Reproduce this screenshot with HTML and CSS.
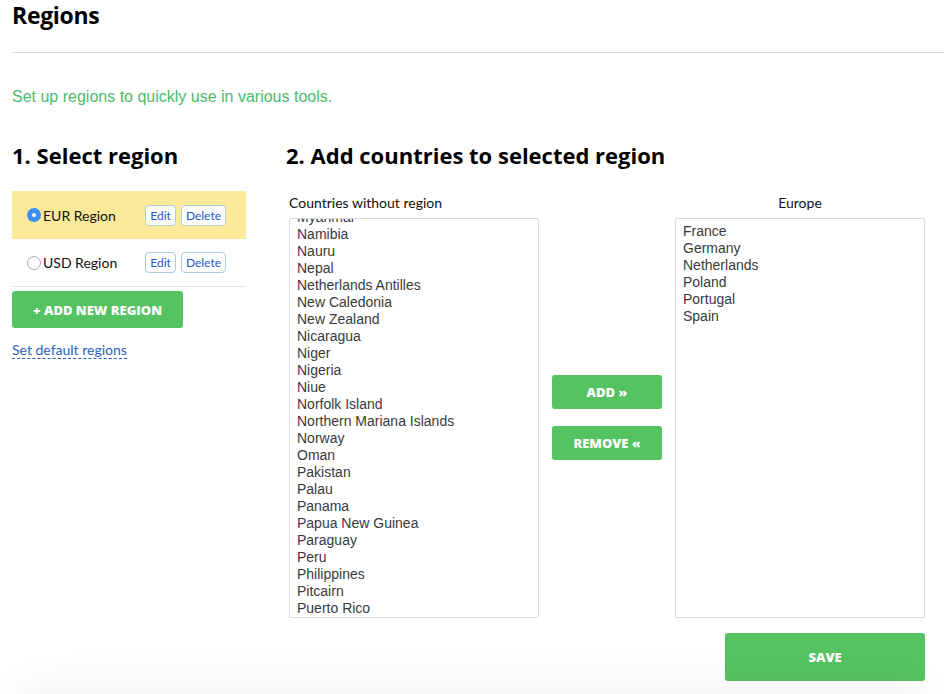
FILE: index.html
```html
<!DOCTYPE html>
<html lang="en">
<head>
<meta charset="utf-8">
<title>Regions</title>
<link rel="stylesheet" href="styles.css">
</head>
<body>
<div class="page">
  <h1 class="title">Regions</h1>
  <hr class="rule">
  <p class="intro">Set up regions to quickly use in various tools.</p>

  <div class="columns">
    <section class="left">
      <h2 class="heading">1. Select region</h2>
      <ul class="regions">
        <li class="region selected">
          <label class="region-label"><span class="radio checked"></span>EUR Region</label>
          <span class="region-actions"><button class="small-btn">Edit</button><button class="small-btn">Delete</button></span>
        </li>
        <li class="region">
          <label class="region-label"><span class="radio"></span>USD Region</label>
          <span class="region-actions"><button class="small-btn">Edit</button><button class="small-btn">Delete</button></span>
        </li>
      </ul>
      <button class="green-btn add-region">+ ADD NEW REGION</button>
      <a class="default-link" href="#">Set default regions</a>
    </section>

    <section class="right">
      <h2 class="heading">2. Add countries to selected region</h2>
      <div class="transfer">
        <div class="list-col">
          <div class="list-label">Countries without region</div>
          <div class="listbox">
            <ul class="items scrolled">
              <li>Myanmar</li>
              <li>Namibia</li>
              <li>Nauru</li>
              <li>Nepal</li>
              <li>Netherlands Antilles</li>
              <li>New Caledonia</li>
              <li>New Zealand</li>
              <li>Nicaragua</li>
              <li>Niger</li>
              <li>Nigeria</li>
              <li>Niue</li>
              <li>Norfolk Island</li>
              <li>Northern Mariana Islands</li>
              <li>Norway</li>
              <li>Oman</li>
              <li>Pakistan</li>
              <li>Palau</li>
              <li>Panama</li>
              <li>Papua New Guinea</li>
              <li>Paraguay</li>
              <li>Peru</li>
              <li>Philippines</li>
              <li>Pitcairn</li>
              <li>Puerto Rico</li>
            </ul>
          </div>
        </div>
        <div class="move-btns">
          <button class="green-btn move">ADD &raquo;</button>
          <button class="green-btn move">REMOVE &laquo;</button>
        </div>
        <div class="list-col">
          <div class="list-label center">Europe</div>
          <div class="listbox">
            <ul class="items">
              <li>France</li>
              <li>Germany</li>
              <li>Netherlands</li>
              <li>Poland</li>
              <li>Portugal</li>
              <li>Spain</li>
            </ul>
          </div>
        </div>
      </div>
      <div class="save-row"><button class="green-btn save">SAVE</button></div>
    </section>
  </div>
</div>
<div class="footer-shadow"></div>
</body>
</html>
```

FILE: styles.css
```css
html, body {
  margin: 0;
  padding: 0;
  background: #fff;
  overflow: hidden;
}
body {
  font-family: Lato, "Open Sans", sans-serif;
  color: #111;
  height: 694px;
}
.page {
  padding: 0 0 0 12px;
}
.title {
  margin: 0;
  padding-top: 1px;
  font-family: "Open Sans", Lato, sans-serif;
  font-size: 23px;
  line-height: 29px;
  font-weight: 700;
  letter-spacing: -0.3px;
  color: #000;
}
.rule {
  margin: 22px 0 0 0;
  border: 0;
  border-top: 1px solid #dcdcdc;
  height: 0;
}
.intro {
  margin: 34px 0 0 0;
  font-family: "Liberation Sans", Arial, sans-serif;
  font-size: 16px;
  line-height: 19px;
  color: #4dba6b;
}
.columns {
  display: flex;
  margin-top: 36px;
}
.left {
  width: 234px;
  flex: none;
}
.right {
  margin-left: 40px;
  width: 639px;
  flex: none;
}
.heading {
  margin: 0;
  font-family: "Open Sans", Lato, sans-serif;
  font-size: 22px;
  line-height: 27px;
  font-weight: 700;
  letter-spacing: 0;
  color: #000;
}
.regions {
  list-style: none;
  margin: 22px 0 0 0;
  padding: 0;
}
.region {
  display: flex;
  align-items: center;
  justify-content: space-between;
  height: 48px;
  padding: 0 20px 0 15px;
  box-sizing: border-box;
}
.region + .region {
  border-bottom: 1px solid #e6e6e6;
}
.region.selected {
  background: #fde99a;
}
.region-label {
  display: flex;
  align-items: center;
  font-size: 14px;
  color: #111;
}
.radio {
  width: 14px;
  height: 14px;
  box-sizing: border-box;
  border-radius: 50%;
  border: 1px solid #a8a8a8;
  background: #fff;
  margin-right: 2px;
  display: inline-block;
  position: relative;
}
.radio.checked {
  border: none;
  background: #3d8ff5;
}
.radio.checked::after {
  content: "";
  position: absolute;
  left: 5px;
  top: 5px;
  width: 4px;
  height: 4px;
  border-radius: 50%;
  background: #fff;
}
.region-actions {
  display: flex;
  gap: 5px;
}
.small-btn {
  font-family: Lato, "Open Sans", sans-serif;
  font-size: 12px;
  color: #2457c9;
  background: #fff;
  border: 1px solid #a9cde3;
  border-radius: 4px;
  height: 21px;
  padding: 0 4px;
  line-height: 19px;
  cursor: pointer;
}
.green-btn {
  background: #55c362;
  color: #fff;
  border: none;
  border-radius: 3px;
  font-family: "Open Sans", Lato, sans-serif;
  font-weight: 800;
  font-size: 13px;
  letter-spacing: 0;
  cursor: pointer;
  padding: 0;
}
.add-region {
  display: block;
  width: 171px;
  height: 37px;
  margin-top: 4px;
}
.default-link {
  display: inline-block;
  margin-top: 14px;
  font-size: 14px;
  line-height: 16px;
  color: #2b62c4;
  text-decoration: none;
  border-bottom: 1px dashed #2b62c4;
}
.transfer {
  display: flex;
  margin-top: 25px;
  padding-left: 3px;
}
.list-col {
  width: 250px;
  flex: none;
}
.list-label {
  font-size: 14px;
  line-height: 17px;
  height: 17px;
  color: #111;
  margin-bottom: 7px;
}
.list-label.center {
  text-align: center;
}
.listbox {
  height: 400px;
  box-sizing: border-box;
  border: 1px solid #dadada;
  border-radius: 2px;
  overflow: hidden;
}
.items {
  list-style: none;
  margin: 0;
  padding: 4px 0 0 7px;
  font-family: "Liberation Sans", Arial, sans-serif;
  font-size: 14px;
  line-height: 17px;
  color: #3a3a3a;
}
.items.scrolled {
  margin-top: -14px;
}
.move-btns {
  width: 110px;
  flex: none;
  margin: 0 13px;
  padding-top: 22px;
  display: flex;
  flex-direction: column;
  justify-content: center;
  gap: 17px;
}
.move {
  height: 34px;
  width: 110px;
}
.save-row {
  display: flex;
  justify-content: flex-end;
  width: 639px;
  margin-top: 15px;
}
.save {
  width: 200px;
  height: 48px;
  font-size: 13px;
}
.footer-shadow {
  position: fixed;
  left: 40px;
  right: 40px;
  top: 700px;
  height: 60px;
  box-shadow: 0 0 40px 16px rgba(0, 0, 0, 0.06);
}
```
